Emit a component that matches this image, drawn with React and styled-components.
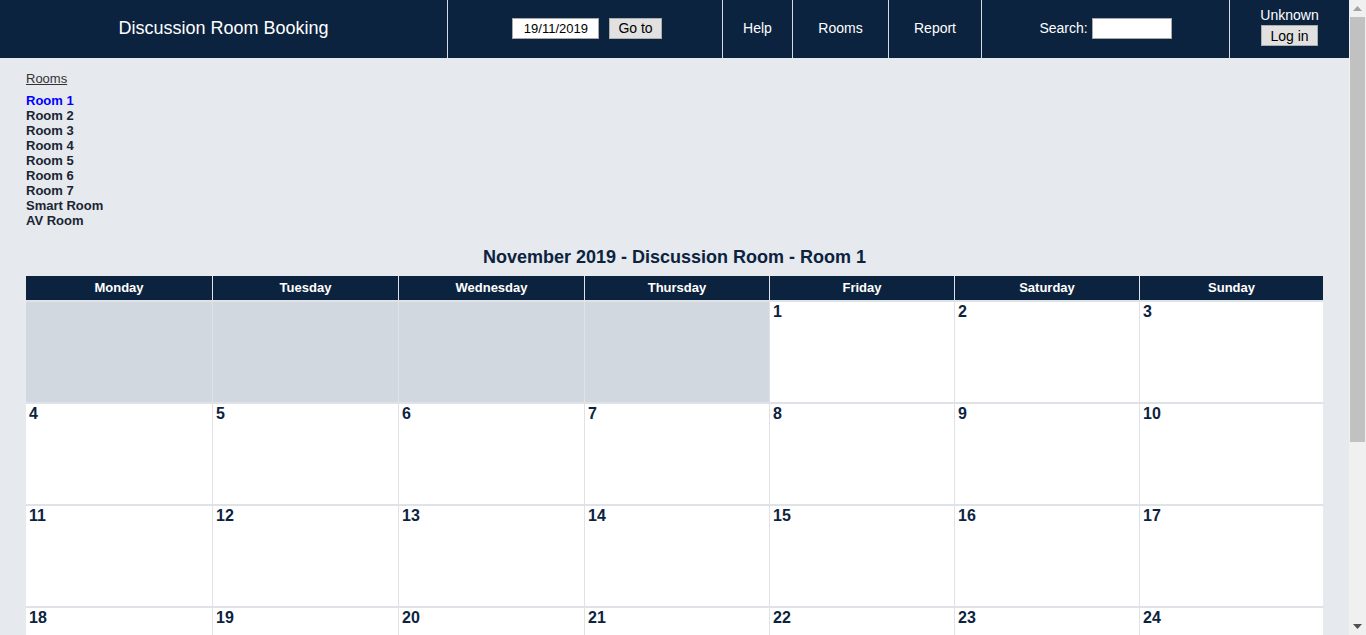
import React from "react";
import styled, { createGlobalStyle } from "styled-components";

const Global = createGlobalStyle`
  html, body { margin: 0; padding: 0; }
  body {
    background: #e6e9ed;
    font-family: "Liberation Sans", Arial, sans-serif;
    color: #0c2340;
  }
`;

const NAVY = "#0c2340";

const Page = styled.div`
  margin-right: 17px;
`;

const Header = styled.header`
  display: flex;
  height: 58px;
  background: ${NAVY};
  color: #fff;
`;

const HCell = styled.div`
  flex: ${(p) => (p.$w ? `0 0 ${p.$w}px` : "1 1 auto")};
  box-sizing: border-box;
  display: flex;
  flex-direction: ${(p) => (p.$col ? "column" : "row")};
  align-items: center;
  justify-content: center;
  gap: ${(p) => (p.$col ? "2px" : "0")};
  padding-bottom: ${(p) => (p.$col ? "5px" : "2px")};
  border-left: ${(p) => (p.$first ? "none" : "1px solid #d6dbe1")};
  font-size: 14px;
`;

const Title = styled.div`
  font-size: 18px;
`;

const DateInput = styled.input`
  width: 87px;
  height: 21px;
  box-sizing: border-box;
  border: 1px solid #a9a9a9;
  background: #fff;
  font: 13px "Liberation Sans", Arial, sans-serif;
  text-align: center;
  padding: 0;
  margin-right: 10px;
  margin-left: 4px;
  color: #000;
`;

const Btn = styled.button`
  height: 21px;
  box-sizing: border-box;
  border: 1px solid #adadad;
  background: #e1e1e1;
  font: 14px "Liberation Sans", Arial, sans-serif;
  color: #000;
  padding: 0 8px;
`;

const SearchInput = styled.input`
  width: 80px;
  height: 21px;
  box-sizing: border-box;
  border: 1px solid #a9a9a9;
  background: #fff;
  margin-left: 4px;
  padding: 0;
`;

const Main = styled.main`
  padding: 11px 26px 20px 26px;
`;

const RoomsLabel = styled.a`
  display: inline-block;
  font-size: 13px;
  color: #333;
  text-decoration: underline;
  line-height: 15px;
  margin-bottom: 7px;
`;

const RoomList = styled.ul`
  list-style: none;
  margin: 0;
  padding: 0;
`;

const RoomItem = styled.li`
  font-size: 13px;
  font-weight: bold;
  line-height: 15px;
  color: ${(p) => (p.$active ? "#0000ff" : "#1a2533")};
`;

const CalTitle = styled.h2`
  margin: 19px 0 8px;
  text-align: center;
  font-size: 18px;
  font-weight: bold;
  line-height: 21px;
  color: ${NAVY};
`;

const Cal = styled.div`
  display: grid;
  grid-template-columns: 186px 185px 185px 184px 184px 184px 1fr;
  column-gap: 1px;
  row-gap: 2px;
  background: #dfe2e6;
`;

const DayHead = styled.div`
  background: ${NAVY};
  color: #fff;
  font-size: 13px;
  font-weight: bold;
  text-align: center;
  height: 24px;
  line-height: 24px;
`;

const Cell = styled.div`
  background: ${(p) => (p.$empty ? "#d1d8df" : "#fff")};
  height: 100px;
  padding: 1px 3px;
  box-sizing: border-box;
  font-size: 16px;
  font-weight: bold;
  color: #0c2340;
  line-height: 18px;
`;

const Scrollbar = styled.div`
  position: fixed;
  top: 0;
  right: 0;
  width: 17px;
  height: 100vh;
  background: #f0f0f0;
  display: flex;
  flex-direction: column;
  align-items: center;
`;

const Arrow = styled.div`
  flex: 0 0 17px;
  width: 17px;
  display: flex;
  align-items: center;
  justify-content: center;
`;

const Thumb = styled.div`
  width: 15px;
  height: 425px;
  background: #c1c1c1;
`;

const Track = styled.div`
  flex: 1;
`;

const days = ["Monday", "Tuesday", "Wednesday", "Thursday", "Friday", "Saturday", "Sunday"];
const rooms = ["Room 1", "Room 2", "Room 3", "Room 4", "Room 5", "Room 6", "Room 7", "Smart Room", "AV Room"];

export default function App() {
  const cells = [];
  for (let i = 0; i < 4; i++) cells.push(null);
  for (let d = 1; d <= 30; d++) cells.push(d);
  while (cells.length % 7) cells.push(null);

  return (
    <>
      <Global />
      <Page>
        <Header>
          <HCell $w={447} $first>
            <Title>Discussion Room Booking</Title>
          </HCell>
          <HCell $w={275}>
            <DateInput defaultValue="19/11/2019" />
            <Btn>Go to</Btn>
          </HCell>
          <HCell $w={70}>Help</HCell>
          <HCell $w={96}>Rooms</HCell>
          <HCell $w={93}>Report</HCell>
          <HCell $w={248}>
            Search:<SearchInput />
          </HCell>
          <HCell $col>
            <span>Unknown</span>
            <Btn>Log in</Btn>
          </HCell>
        </Header>
        <Main>
          <RoomsLabel>Rooms</RoomsLabel>
          <RoomList>
            {rooms.map((r, i) => (
              <RoomItem key={r} $active={i === 0}>
                {r}
              </RoomItem>
            ))}
          </RoomList>
          <CalTitle>November 2019 - Discussion Room - Room 1</CalTitle>
          <Cal>
            {days.map((d) => (
              <DayHead key={d}>{d}</DayHead>
            ))}
            {cells.map((c, i) => (
              <Cell key={i} $empty={c === null}>
                {c}
              </Cell>
            ))}
          </Cal>
        </Main>
      </Page>
      <Scrollbar>
        <Arrow>
          <svg width="9" height="5" viewBox="0 0 9 5"><path d="M0 5 L4.5 0 L9 5 Z" fill="#a3a3a3" /></svg>
        </Arrow>
        <Thumb />
        <Track />
        <Arrow>
          <svg width="9" height="5" viewBox="0 0 9 5"><path d="M0 0 L4.5 5 L9 0 Z" fill="#505050" /></svg>
        </Arrow>
      </Scrollbar>
    </>
  );
}
